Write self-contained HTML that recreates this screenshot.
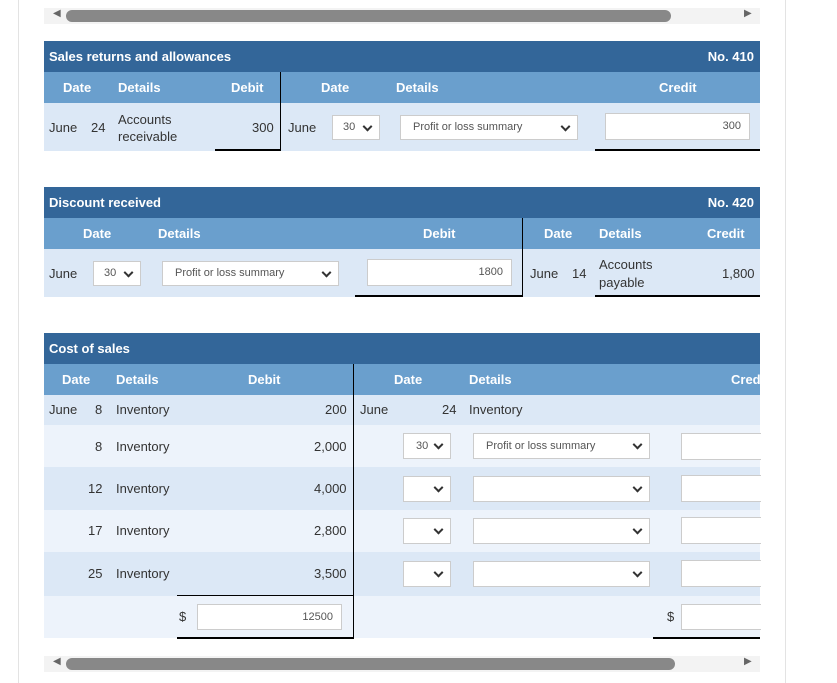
<!DOCTYPE html><html><head><meta charset="utf-8"><style>
body{margin:0;width:837px;height:683px;background:#fff;font-family:"Liberation Sans",sans-serif;font-size:13px;color:#333;position:relative;overflow:hidden}
div{position:absolute;box-sizing:border-box}
.hd{background:#336699;color:#fff;font-weight:bold;font-size:13px;height:31px;line-height:31px;left:44px;width:716px}
.sh{background:#6a9fcd;color:#fff;font-weight:bold;height:31px;line-height:31px;left:44px;width:716px}
.r1{background:#dce8f6;left:44px;width:716px}
.r2{background:#edf3fb;left:44px;width:716px}
.t{white-space:nowrap}
.in{background:#fff;border:1px solid #ccc;font-size:11px;color:#555}
.sel:after{content:"";position:absolute;right:8px;top:50%;width:5px;height:5px;border-right:2px solid #333;border-bottom:2px solid #333;transform:translateY(-70%) rotate(45deg)}
.vl{background:#000;width:1px}
.hl{background:#000;height:2px}
.sb{height:12px;background:#888;border-radius:6px}
</style></head><body>
<div style="left:18px;top:0;width:1px;height:683px;background:#e3e3e3"></div>
<div style="left:785px;top:0;width:1px;height:683px;background:#e3e3e3"></div>
<div style="left:44px;top:8px;width:716px;height:16px;background:#f3f3f3"></div>
<div class="sb" style="left:66px;top:10px;width:605px"></div>
<div class="t" style="left:53px;top:8px;font-size:10px;color:#666">◀</div>
<div class="t" style="left:744px;top:8px;font-size:10px;color:#666">▶</div>

<!-- Table 1 -->
<div class="hd" style="top:41px;padding-left:5px">Sales returns and allowances<span style="position:absolute;right:6px">No. 410</span></div>
<div class="sh" style="top:72px;height:31px"></div>
<div class="t" style="left:63px;top:80px;color:#fff;font-weight:bold">Date</div>
<div class="t" style="left:118px;top:80px;color:#fff;font-weight:bold">Details</div>
<div class="t" style="left:231px;top:80px;color:#fff;font-weight:bold">Debit</div>
<div class="t" style="left:321px;top:80px;color:#fff;font-weight:bold">Date</div>
<div class="t" style="left:396px;top:80px;color:#fff;font-weight:bold">Details</div>
<div class="t" style="left:659px;top:80px;color:#fff;font-weight:bold">Credit</div>
<div class="r1" style="top:103px;height:48px"></div>
<div class="t" style="left:49px;top:120px">June</div>
<div class="t" style="left:91px;top:120px">24</div>
<div class="t" style="left:118px;top:111px;line-height:17px">Accounts<br>receivable</div>
<div class="t" style="left:252px;top:120px">300</div>
<div class="t" style="left:288px;top:120px">June</div>
<div class="in sel" style="left:332px;top:115px;width:48px;height:25px;line-height:23px;padding-left:10px">30</div>
<div class="in sel" style="left:400px;top:115px;width:178px;height:25px;line-height:23px;padding-left:12px">Profit or loss summary</div>
<div class="in" style="left:605px;top:113px;width:145px;height:27px;line-height:25px;text-align:right;padding-right:8px">300</div>
<div class="vl" style="left:280px;top:72px;height:79px"></div>
<div class="hl" style="left:215px;top:149px;width:66px"></div>
<div class="hl" style="left:595px;top:149px;width:165px"></div>

<!-- Table 2 -->
<div class="hd" style="top:187px;padding-left:5px">Discount received<span style="position:absolute;right:6px">No. 420</span></div>
<div class="sh" style="top:218px"></div>
<div class="t" style="left:83px;top:226px;color:#fff;font-weight:bold">Date</div>
<div class="t" style="left:158px;top:226px;color:#fff;font-weight:bold">Details</div>
<div class="t" style="left:423px;top:226px;color:#fff;font-weight:bold">Debit</div>
<div class="t" style="left:544px;top:226px;color:#fff;font-weight:bold">Date</div>
<div class="t" style="left:599px;top:226px;color:#fff;font-weight:bold">Details</div>
<div class="t" style="left:707px;top:226px;color:#fff;font-weight:bold">Credit</div>
<div class="r1" style="top:249px;height:48px"></div>
<div class="t" style="left:49px;top:266px">June</div>
<div class="in sel" style="left:93px;top:261px;width:48px;height:25px;line-height:23px;padding-left:10px">30</div>
<div class="in sel" style="left:162px;top:261px;width:177px;height:25px;line-height:23px;padding-left:12px">Profit or loss summary</div>
<div class="in" style="left:367px;top:259px;width:145px;height:27px;line-height:25px;text-align:right;padding-right:8px">1800</div>
<div class="t" style="left:530px;top:266px">June</div>
<div class="t" style="left:572px;top:266px">14</div>
<div class="t" style="left:599px;top:256px;line-height:18px">Accounts<br>payable</div>
<div class="t" style="left:722px;top:266px">1,800</div>
<div class="vl" style="left:522px;top:218px;height:79px"></div>
<div class="hl" style="left:355px;top:295px;width:168px"></div>
<div class="hl" style="left:595px;top:295px;width:165px"></div>

<!-- Table 3 -->
<div class="hd" style="top:333px;padding-left:5px;top:333px;line-height:31px">Cost of sales</div>
<div class="sh" style="top:364px"></div>
<div class="t" style="left:62px;top:372px;color:#fff;font-weight:bold">Date</div>
<div class="t" style="left:116px;top:372px;color:#fff;font-weight:bold">Details</div>
<div class="t" style="left:248px;top:372px;color:#fff;font-weight:bold">Debit</div>
<div class="t" style="left:394px;top:372px;color:#fff;font-weight:bold">Date</div>
<div class="t" style="left:469px;top:372px;color:#fff;font-weight:bold">Details</div>
<div class="t" style="left:731px;top:372px;color:#fff;font-weight:bold">Credi</div>
<div class="r1" style="top:395px;height:30px"></div>
<div class="r2" style="top:425px;height:42px"></div>
<div class="r1" style="top:467px;height:43px"></div>
<div class="r2" style="top:510px;height:42px"></div>
<div class="r1" style="top:552px;height:44px"></div>
<div class="r2" style="top:596px;height:42px"></div>
<div class="t" style="left:49px;top:402px">June</div>
<div class="t" style="left:95px;top:402px">8</div>
<div class="t" style="left:116px;top:402px">Inventory</div>
<div class="t" style="left:325px;top:402px">200</div>
<div class="t" style="left:360px;top:402px">June</div>
<div class="t" style="left:442px;top:402px">24</div>
<div class="t" style="left:469px;top:402px">Inventory</div>
<div class="t" style="left:95px;top:439px">8</div><div class="t" style="left:116px;top:439px">Inventory</div><div class="t" style="left:314px;top:439px">2,000</div>
<div class="t" style="left:88px;top:481px">12</div><div class="t" style="left:116px;top:481px">Inventory</div><div class="t" style="left:314px;top:481px">4,000</div>
<div class="t" style="left:88px;top:523px">17</div><div class="t" style="left:116px;top:523px">Inventory</div><div class="t" style="left:314px;top:523px">2,800</div>
<div class="t" style="left:88px;top:566px">25</div><div class="t" style="left:116px;top:566px">Inventory</div><div class="t" style="left:314px;top:566px">3,500</div>
<div class="in sel" style="left:403px;top:433px;width:48px;height:26px;line-height:24px;padding-left:12px">30</div>
<div class="in sel" style="left:473px;top:433px;width:177px;height:26px;line-height:24px;padding-left:12px">Profit or loss summary</div>
<div class="in" style="left:681px;top:433px;width:80px;height:27px;border-right:none"></div>
<div class="in sel" style="left:403px;top:476px;width:48px;height:26px"></div>
<div class="in sel" style="left:473px;top:476px;width:177px;height:26px"></div>
<div class="in" style="left:681px;top:475px;width:80px;height:27px;border-right:none"></div>
<div class="in sel" style="left:403px;top:518px;width:48px;height:26px"></div>
<div class="in sel" style="left:473px;top:518px;width:177px;height:26px"></div>
<div class="in" style="left:681px;top:517px;width:80px;height:27px;border-right:none"></div>
<div class="in sel" style="left:403px;top:561px;width:48px;height:26px"></div>
<div class="in sel" style="left:473px;top:561px;width:177px;height:26px"></div>
<div class="in" style="left:681px;top:560px;width:80px;height:27px;border-right:none"></div>
<div class="t" style="left:179px;top:609px">$</div>
<div class="in" style="left:197px;top:604px;width:145px;height:26px;line-height:24px;text-align:right;padding-right:8px">12500</div>
<div class="t" style="left:667px;top:609px">$</div>
<div class="in" style="left:681px;top:604px;width:80px;height:26px;border-right:none"></div>
<div class="vl" style="left:353px;top:364px;height:275px"></div>
<div class="hl" style="left:177px;top:595px;width:177px;height:1px"></div>
<div class="hl" style="left:177px;top:637px;width:177px"></div>
<div class="hl" style="left:653px;top:637px;width:107px"></div>

<div style="left:44px;top:656px;width:716px;height:16px;background:#f3f3f3"></div>
<div class="sb" style="left:66px;top:658px;width:609px"></div>
<div class="t" style="left:53px;top:656px;font-size:10px;color:#666">◀</div>
<div class="t" style="left:744px;top:656px;font-size:10px;color:#666">▶</div>
</body></html>
